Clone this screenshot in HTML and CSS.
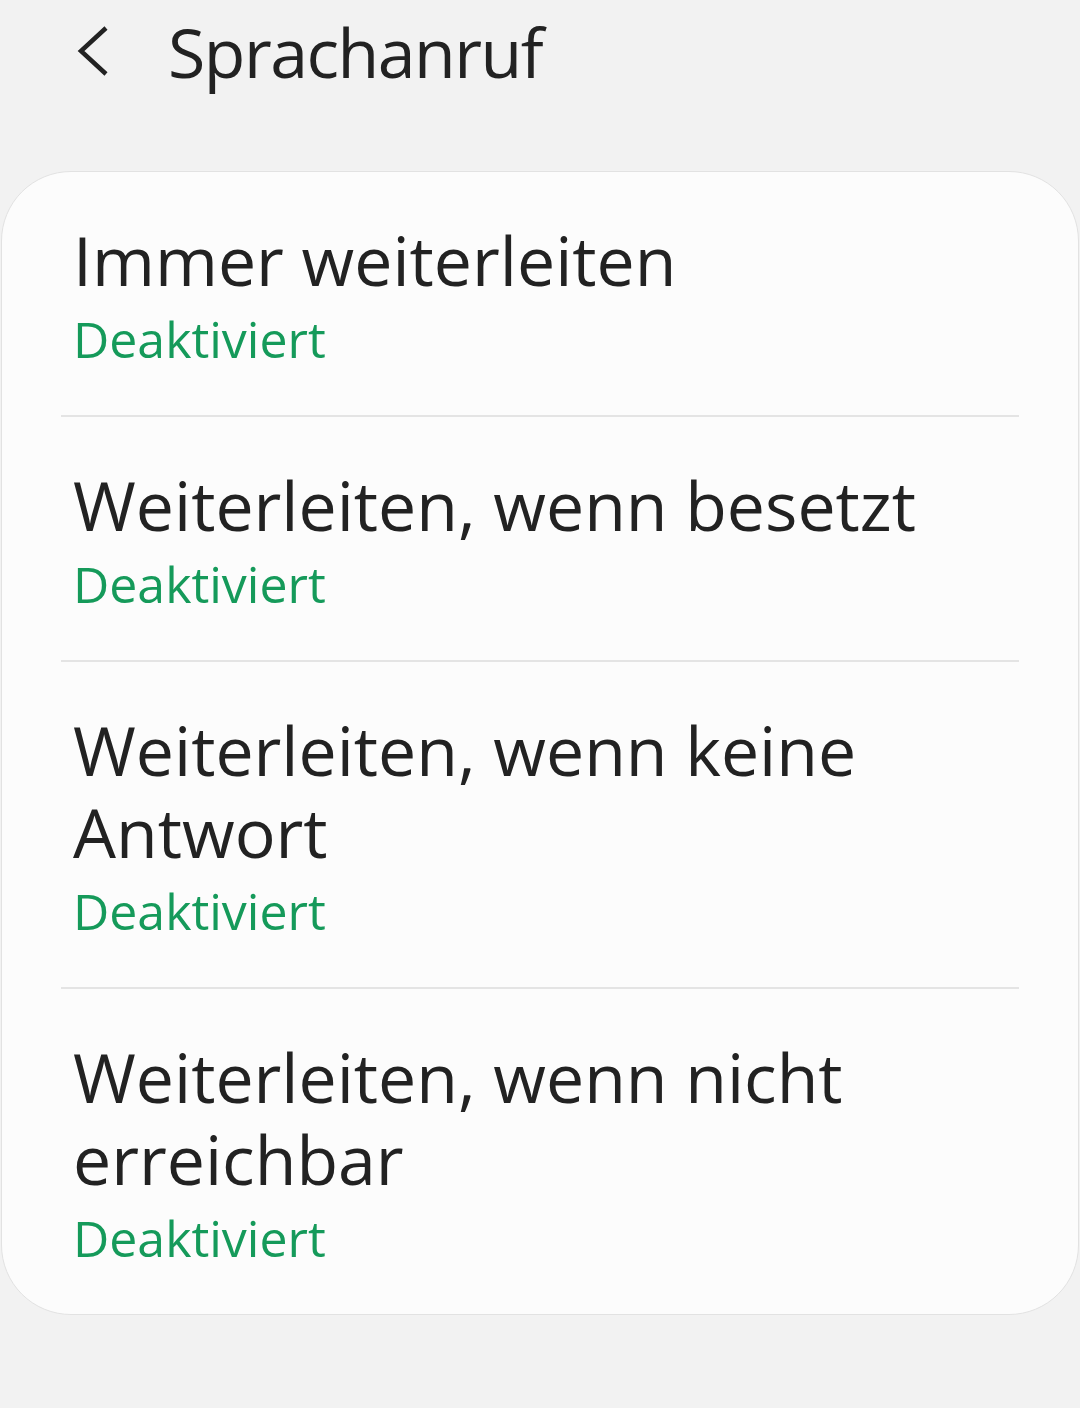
FILE: index.html
```html
<!DOCTYPE html>
<html lang="de">
<head>
  <meta charset="UTF-8" />
  <meta name="viewport" content="width=device-width, initial-scale=1" />
  <title>Sprachanruf</title>
  <link rel="stylesheet" href="styles.css">
</head>
<body>

  <header class="topbar">
    <button class="back" type="button" aria-label="Zurück">
      <svg width="36" height="52" viewBox="0 0 36 52" aria-hidden="true">
        <path d="M30 3 L5 26 L30 49" fill="none" stroke="#222" stroke-width="4.5" stroke-linejoin="miter"/>
      </svg>
    </button>
    <h1 class="title">Sprachanruf</h1>
  </header>

  <ul class="card">
    <li class="item">
      <div class="item-title">Immer weiterleiten</div>
      <div class="item-status">Deaktiviert</div>
    </li>
    <li class="item">
      <div class="item-title">Weiterleiten, wenn besetzt</div>
      <div class="item-status">Deaktiviert</div>
    </li>
    <li class="item">
      <div class="item-title">Weiterleiten, wenn keine Antwort</div>
      <div class="item-status">Deaktiviert</div>
    </li>
    <li class="item">
      <div class="item-title">Weiterleiten, wenn nicht erreichbar</div>
      <div class="item-status">Deaktiviert</div>
    </li>
  </ul>

</body>
</html>
```

FILE: styles.css
```css
body {
  margin: 0;
  background-color: #f2f2f2;
  font-family: "Open Sans", "Noto Sans", sans-serif;
  color: #222;
}
.topbar {
  display: flex;
  align-items: center;
  height: 102px;
  padding-left: 76px;
}
.back {
  display: flex;
  background: none;
  border: none;
  padding: 0;
  margin-right: 56px;
}
.title {
  margin: 0;
  font-size: 68px;
  font-weight: 400;
  letter-spacing: -1.5px;
}
.card {
  list-style: none;
  margin: 69px 1px 0;
  padding: 0;
  background: #fcfcfc;
  border: 1px solid #e2e2e2;
  border-radius: 70px;
}
.item {
  margin: 0 59px;
  padding: 47px 12px 40px;
  border-bottom: 2px solid #e4e4e4;
}
.item:last-child {
  border-bottom: none;
}
.item-title {
  font-size: 68px;
  line-height: 82px;
  padding-right: 60px;
}
.item-status {
  margin-top: 3px;
  font-size: 50px;
  line-height: 71px;
  color: #159a5a;
}
```
